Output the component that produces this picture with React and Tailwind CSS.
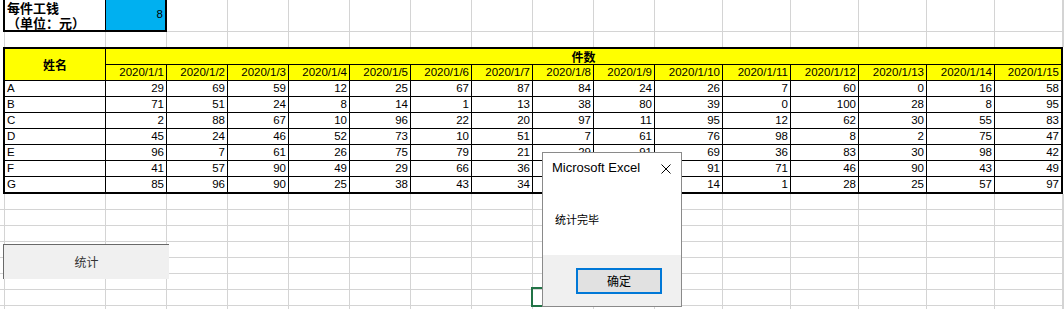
import React from 'react';

const W = {
  1: 'w-[1px]',
  5: 'w-[5px]',
  59: 'w-[59px]',
  61: 'w-[61px]',
  66: 'w-[66px]',
  68: 'w-[68px]',
  101: 'w-[101px]',
};

// column widths of the sheet, gridline drawn on the last pixel of each
const sheetCols = [5, 101, 61, 61, 61, 61, 61, 61, 61, 61, 61, 68, 68, 68, 68, 68, 68, 1];
// columns B..P inside the bordered table (last one loses 2px to the thick border)
const tableCols = [61, 61, 61, 61, 61, 61, 61, 61, 61, 68, 68, 68, 68, 68, 66];

const dates = Array.from({ length: 15 }, (_, i) => `2020/1/${i + 1}`);

const rows = [
  ['A', [29, 69, 59, 12, 25, 67, 87, 84, 24, 26, 7, 60, 0, 16, 58]],
  ['B', [71, 51, 24, 8, 14, 1, 13, 38, 80, 39, 0, 100, 28, 8, 95]],
  ['C', [2, 88, 67, 10, 96, 22, 20, 97, 11, 95, 12, 62, 30, 55, 83]],
  ['D', [45, 24, 46, 52, 73, 10, 51, 7, 61, 76, 98, 8, 2, 75, 47]],
  ['E', [96, 7, 61, 26, 75, 79, 21, 29, 91, 69, 36, 83, 30, 98, 42]],
  ['F', [41, 57, 90, 49, 29, 66, 36, 52, 18, 91, 71, 46, 90, 43, 49]],
  ['G', [85, 96, 90, 25, 38, 43, 34, 65, 33, 14, 1, 28, 25, 57, 97]],
];

const GridRow = ({ h, cols = sheetCols, bottom = true }) => (
  <div className={`flex ${h}`}>
    {cols.map((w, i) => (
      <div
        key={i}
        className={`${W[w]} shrink-0 h-full border-r border-[#d4d4d4] ${bottom ? 'border-b' : ''}`}
      />
    ))}
  </div>
);

const Sheet = () => (
  <div className="w-[1064px]">
    {/* row 1: unit price box */}
    <div className="flex h-[32px]">
      <div className="w-[3px] shrink-0" />
      <div className="w-[164px] shrink-0 flex border-l-2 border-r-2 border-b-2 border-black">
        <div className="w-[101px] shrink-0 border-r border-black pl-[2px] flex flex-col justify-center text-[13px] leading-[15px] font-bold">
          <span>每件工钱</span>
          <span>（单位：元）</span>
        </div>
        <div className="w-[59px] shrink-0 bg-[#00b0f0] flex items-center justify-end pr-[2px] text-[11.5px] font-['Liberation_Sans',sans-serif]">
          8
        </div>
      </div>
      {sheetCols.slice(3).map((w, i) => (
        <div key={i} className={`${W[w]} shrink-0 h-full border-r border-b border-[#d4d4d4]`} />
      ))}
    </div>

    <GridRow h="h-[15px]" bottom={false} />

    {/* data table */}
    <div className="ml-[3px] w-[1060px] border-2 border-black font-['Liberation_Sans','Noto_Sans_CJK_SC',sans-serif] text-[11.5px] text-black">
      <div className="flex">
        <div className="w-[101px] shrink-0 h-[32px] border-r border-b border-black bg-[#ffff00] flex items-center justify-center text-[12px] font-bold font-['Noto_Sans_CJK_SC',sans-serif]">
          姓名
        </div>
        <div className="flex-1 flex flex-col">
          <div className="h-[16px] border-b border-black bg-[#ffff00] flex items-center justify-center text-[12px] font-bold font-['Noto_Sans_CJK_SC',sans-serif]">
            件数
          </div>
          <div className="h-[16px] flex border-b border-black bg-[#ffff00]">
            {dates.map((d, i) => (
              <div
                key={d}
                className={`${W[tableCols[i]]} shrink-0 h-full flex items-center justify-end pr-[2px] ${i < 14 ? 'border-r border-black' : ''}`}
              >
                {d}
              </div>
            ))}
          </div>
        </div>
      </div>

      {rows.map(([name, vals], r) => (
        <div key={name} className={`flex ${r < 6 ? 'h-[16px] border-b border-black' : 'h-[15px]'}`}>
          <div className="w-[101px] shrink-0 h-full border-r border-black pl-[2px] flex items-center">{name}</div>
          {vals.map((v, i) => (
            <div
              key={i}
              className={`${W[tableCols[i]]} shrink-0 h-full flex items-center justify-end pr-[2px] ${i < 14 ? 'border-r border-black' : ''}`}
            >
              {v}
            </div>
          ))}
        </div>
      ))}
    </div>

    <GridRow h="h-[16px]" />
    <GridRow h="h-[16px]" />
    <GridRow h="h-[16px]" />
    <GridRow h="h-[16px]" />
    <GridRow h="h-[16px]" />
    <GridRow h="h-[16px]" />
    <GridRow h="h-[16px]" />
    <GridRow h="h-[3px]" bottom={false} />
  </div>
);

const App = () => {
  return (
    <div className="relative w-[1064px] h-[309px] overflow-hidden bg-white font-['Noto_Sans_CJK_SC',sans-serif] text-black">
      <Sheet />

      {/* form button */}
      <button className="absolute left-[3px] top-[244px] w-[166px] h-[35px] bg-[#f0f0f0] border-t border-l border-[#696969] text-[12px] text-[#333] font-['Noto_Sans_CJK_SC',sans-serif]">
        统计
      </button>

      {/* active cell */}
      <div className="absolute left-[531px] top-[287px] w-[63px] h-[20px] border-2 border-[#217346]" />

      {/* message box */}
      <div className="absolute left-[542px] top-[152px] w-[140px] h-[155px] border border-[#8a8a8a] bg-white flex flex-col">
        <div className="h-[30px] flex items-center justify-between pl-[9px] pr-[10px]">
          <span className="text-[13px] font-['Liberation_Sans',sans-serif]">Microsoft Excel</span>
          <svg width="10" height="10" viewBox="0 0 10 10" className="mt-[1px]">
            <path d="M0.5 0.5 L9.5 9.5 M9.5 0.5 L0.5 9.5" stroke="#000" strokeWidth="1" fill="none" />
          </svg>
        </div>
        <div className="h-[72px] pl-[12px] pt-[28px] text-[11px] leading-[16px]">统计完毕</div>
        <div className="flex-1 bg-[#f0f0f0] pl-[33px] pt-[13px]">
          <button className="w-[86px] h-[26px] border-2 border-[#0078d7] bg-[#e1e1e1] text-[12px] flex items-center justify-center">
            确定
          </button>
        </div>
      </div>
    </div>
  );
};

export default App;
